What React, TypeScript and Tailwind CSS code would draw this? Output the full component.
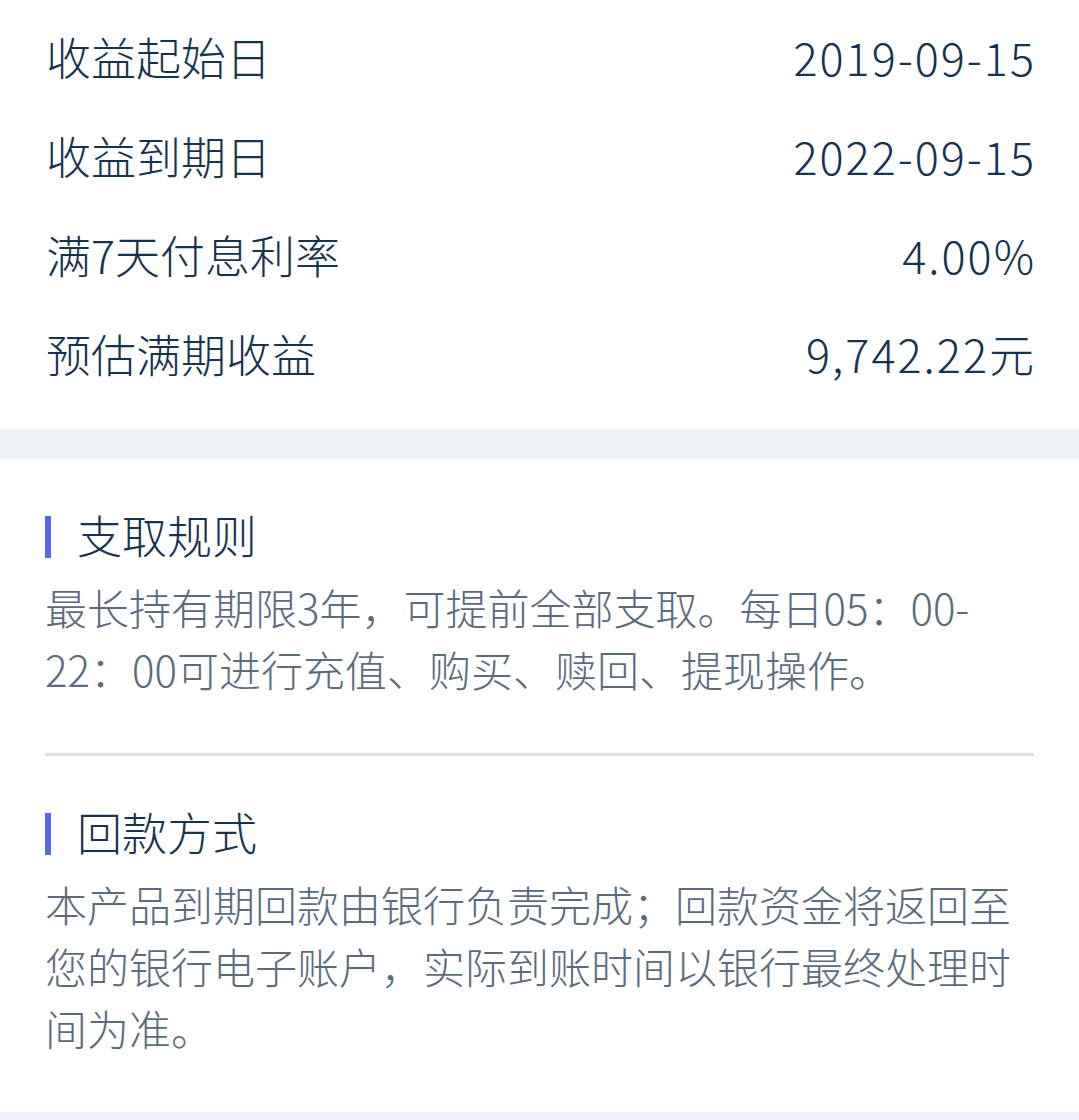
const font = { fontFamily: '"Noto Sans CJK SC", "Noto Sans", sans-serif' }

const rows = [
  { label: "收益起始日", value: "2019-09-15" },
  { label: "收益到期日", value: "2022-09-15" },
  { label: "满7天付息利率", value: "4.00%" },
  { label: "预估满期收益", value: "9,742.22元" },
]

function Section({ title, children }: { title: string; children: React.ReactNode }) {
  return (
    <div>
      <div className="flex items-center h-[62px]">
        <span className="w-[6px] h-[42px] bg-[#5468ee]" />
        <span className="ml-[26px] -mt-[5px] text-[45px] leading-[62px] text-[#17324d]">{title}</span>
      </div>
      <p className="mt-[11px] -translate-y-[3px] text-[42px] leading-[62px] text-[#5b6b7c]">{children}</p>
    </div>
  )
}

export default function App() {
  return (
    <div className="w-[1079px] h-[1120px] bg-white overflow-hidden font-light" style={font}>
      {/* Summary rows */}
      <div className="pl-[46px] pr-[43px] pt-[7px] pb-[26px]">
        {rows.map((r) => (
          <div key={r.label} className="flex items-center justify-between h-[99px] text-[45px] text-[#17324d]">
            <span>{r.label}</span>
            <span className="tracking-[2px]">{r.value}</span>
          </div>
        ))}
      </div>

      <div className="h-[30px] bg-[#edf1f5]" />

      <div className="px-[45px] pt-[47px] pb-[50px]">
        <Section title="支取规则">
          最长持有期限3年，可提前全部支取。每日05：00-22：00可进行充值、购买、赎回、提现操作。
        </Section>
        <div className="mt-[50px] h-[3px] bg-[#d8e0e6]" />
        <div className="mt-[47px]">
          <Section title="回款方式">
            本产品到期回款由银行负责完成；回款资金将返回至您的银行电子账户，实际到账时间以银行最终处理时间为准。
          </Section>
        </div>
      </div>

      <div className="h-[30px] bg-[#edf1f5]" />
    </div>
  )
}
